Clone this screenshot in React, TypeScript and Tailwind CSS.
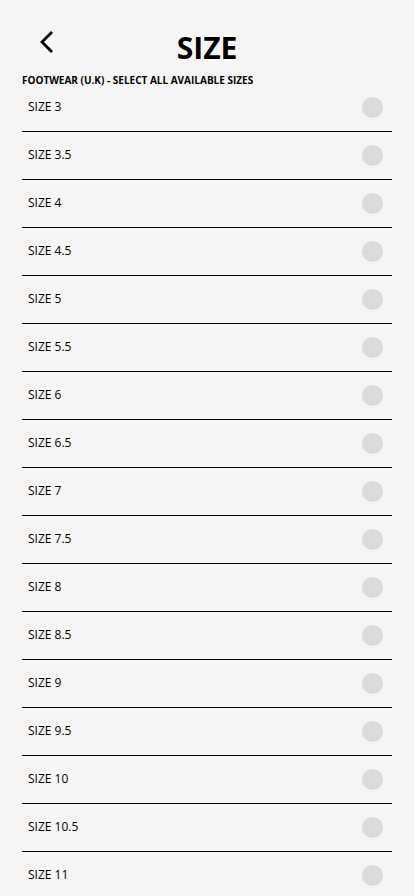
import React from "react";

const sizes = ["3","3.5","4","4.5","5","5.5","6","6.5","7","7.5","8","8.5","9","9.5","10","10.5","11"];

export default function App() {
  return (
    <div className="min-h-screen bg-[#f6f5f3] text-black" style={{ fontFamily: '"Open Sans", sans-serif' }}>
      <div className="relative pt-[30px]">
        <button className="absolute left-[38px] top-[30px] w-[16px] h-[24px] flex items-center justify-center">
          <svg width="16" height="24" viewBox="0 0 16 24" fill="none">
            <path d="M13 3 L4 12 L13 21" stroke="#000" strokeWidth="2.8" strokeLinecap="square" strokeLinejoin="miter" />
          </svg>
        </button>
        <h1 className="text-center text-[30px] leading-[36px] font-bold">SIZE</h1>
      </div>
      <p className="mt-[10px] px-[22px] text-[10px] leading-[8px] font-bold">FOOTWEAR (U.K) - SELECT ALL AVAILABLE SIZES</p>
      <div className="mx-[22px]">
        {sizes.map((s) => (
          <div key={s} className="h-[48px] flex items-center justify-between border-b border-black">
            <span className="pl-[6px] text-[12px] leading-[16px] -mt-[2px]">SIZE {s}</span>
            <span className="w-[21px] h-[21px] rounded-full bg-[#dbdbdb] mr-[9px] -mt-[1px]" />
          </div>
        ))}
      </div>
    </div>
  );
}
